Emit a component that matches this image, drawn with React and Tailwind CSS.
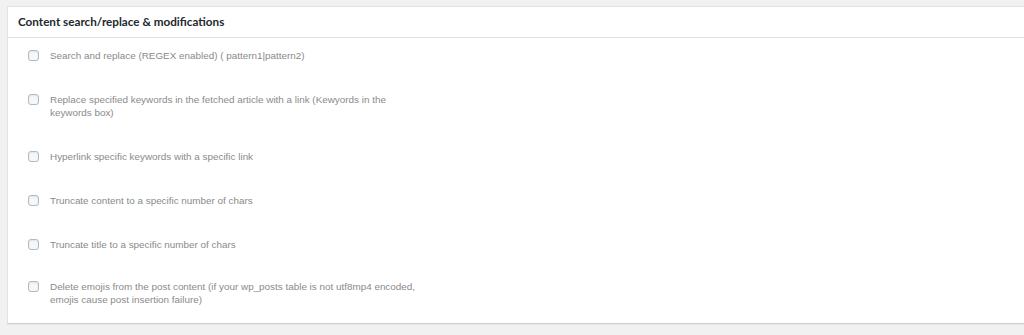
import React from "react";

const options = [
  "Search and replace (REGEX enabled) ( pattern1|pattern2)",
  "Replace specified keywords in the fetched article with a link (Kewyords in the keywords box)",
  "Hyperlink specific keywords with a specific link",
  "Truncate content to a specific number of chars",
  "Truncate title to a specific number of chars",
  "Delete emojis from the post content (if your wp_posts table is not utf8mp4 encoded, emojis cause post insertion failure)",
];

function OptionRow({ label, last }) {
  return (
    <label className={`flex items-start gap-[11px] ${last ? "-mt-[2px]" : ""}`}>
      <input
        type="checkbox"
        className="appearance-none mt-[1px] w-[11px] h-[11px] shrink-0 rounded-[3px] border border-[#b4b9be] bg-[#f5f8fa] shadow-[inset_0_1px_2px_rgba(0,0,0,0.08)]"
      />
      <span className="max-w-[368px] text-[9.9px] leading-[13px] text-[#8a8a8a]">
        {label}
      </span>
    </label>
  );
}

export default function App() {
  return (
    <div
      className="w-[1024px] h-[335px] overflow-hidden bg-[#f1f1f1] pt-[6px] pl-[7px]"
      style={{ fontFamily: '"Liberation Sans", Arial, sans-serif' }}
    >
      <div className="w-[1030px] bg-white border border-[#e2e2e2] border-b-[#cfcfcf] shadow-[0_1px_1px_rgba(0,0,0,0.04)]">
        <div className="h-[31px] flex items-center px-[10px] border-b border-[#e2e2e2]">
          <h3
            className="text-[11.7px] font-bold text-[#23282d]"
            style={{ fontFamily: "Lato, sans-serif" }}
          >
            Content search/replace &amp; modifications
          </h3>
        </div>
        <div className="flex flex-col gap-[31px] pl-[20px] pt-[11px] pb-[17px]">
          {options.map((o, i) => (
            <OptionRow key={i} label={o} last={i === options.length - 1} />
          ))}
        </div>
      </div>
    </div>
  );
}
